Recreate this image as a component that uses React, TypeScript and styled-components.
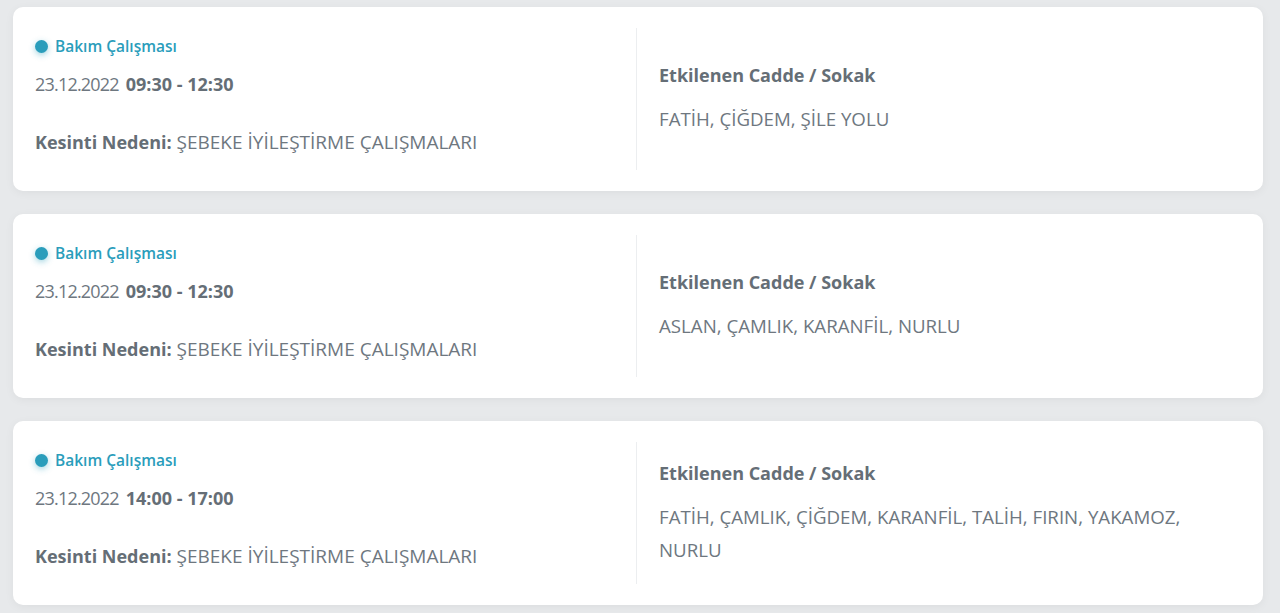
import React from "react";
import styled, { createGlobalStyle } from "styled-components";

const Global = createGlobalStyle`
  html, body { margin: 0; padding: 0; }
  body {
    background: #e7e9eb;
    font-family: "Open Sans", "Noto Sans", sans-serif;
    -webkit-font-smoothing: antialiased;
  }
`;

const List = styled.div`
  display: flex;
  flex-direction: column;
  gap: 23px;
  padding: 7px 17px 8px 13px;
`;

const Card = styled.div`
  display: grid;
  grid-template-columns: 602px 1fr;
  background: #ffffff;
  border-radius: 10px;
  box-shadow: 0 2px 10px rgba(0, 0, 0, 0.05);
  padding: 21px 22px;
  height: 142px;
`;

const Left = styled.div`
  display: flex;
  flex-direction: column;
  border-right: 1px solid #eceef0;
`;

const Right = styled.div`
  display: flex;
  flex-direction: column;
  justify-content: center;
  padding-left: 22px;
`;

const Status = styled.div`
  display: flex;
  align-items: center;
  gap: 7px;
  color: #2a9dbb;
  font-size: 15.5px;
  font-weight: 600;
  height: 20px;
  margin-top: 8px;
`;

const Dot = styled.span`
  width: 13px;
  height: 13px;
  border-radius: 50%;
  background: #2a9dbb;
  box-shadow: 0 2px 6px rgba(42, 157, 187, 0.45);
`;

const Line = styled.div<{ $mt: number }>`
  color: #6e777f;
  font-size: 19px;
  line-height: 24px;
  margin-top: ${(p) => p.$mt}px;
`;

const DateText = styled.span`
  font-size: 18px;
  letter-spacing: -0.8px;
  margin-right: 2px;
`;

const Strong = styled.b`
  font-weight: 700;
  font-size: 18px;
  color: #656e76;
`;

const Heading = styled.div`
  color: #656e76;
  font-size: 18px;
  font-weight: 700;
  line-height: 24px;
`;

const Streets = styled.div`
  color: #6e777f;
  font-size: 18.7px;
  line-height: 33px;
  margin-top: 15px;
  max-width: 560px;
`;

type Item = { time: string; streets: string };

const items: Item[] = [
  { time: "09:30 - 12:30", streets: "FATİH, ÇİĞDEM, ŞİLE YOLU" },
  { time: "09:30 - 12:30", streets: "ASLAN, ÇAMLIK, KARANFİL, NURLU" },
  { time: "14:00 - 17:00", streets: "FATİH, ÇAMLIK, ÇİĞDEM, KARANFİL, TALİH, FIRIN, YAKAMOZ, NURLU" },
];

export default function App() {
  return (
    <>
      <Global />
      <List>
        {items.map((it, i) => (
          <Card key={i}>
            <Left>
              <Status>
                <Dot />
                Bakım Çalışması
              </Status>
              <Line $mt={16}>
                <DateText>23.12.2022</DateText> <Strong>{it.time}</Strong>
              </Line>
              <Line $mt={34}>
                <Strong>Kesinti Nedeni:</Strong> ŞEBEKE İYİLEŞTİRME ÇALIŞMALARI
              </Line>
            </Left>
            <Right>
              <Heading>Etkilenen Cadde / Sokak</Heading>
              <Streets>{it.streets}</Streets>
            </Right>
          </Card>
        ))}
      </List>
    </>
  );
}
